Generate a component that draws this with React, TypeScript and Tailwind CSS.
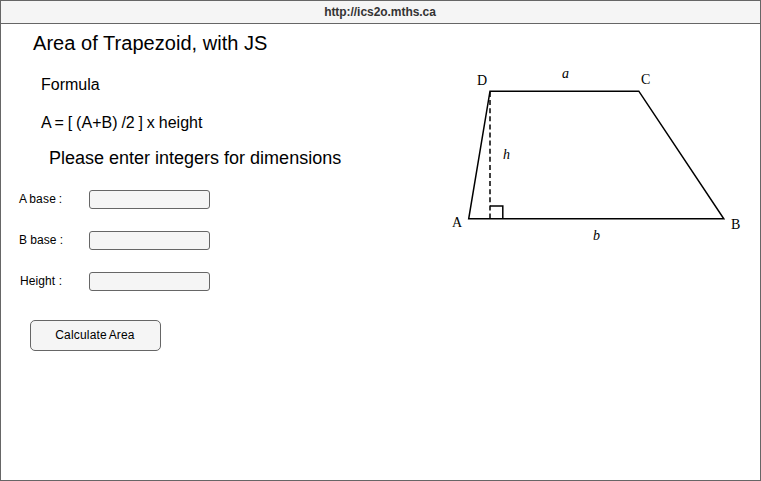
import React from "react";

function Field({ label, inset }: { label: string; inset: string }) {
  return (
    <label className="flex h-[19px] items-center">
      <span className={`w-[88px] shrink-0 whitespace-pre text-[12px] leading-[19px] ${inset}`}>{label}</span>
      <input className="h-[19px] w-[121px] rounded-[3px] border border-[#666] bg-[#f5f5f5] px-1 text-[12px] outline-none" />
    </label>
  );
}

function Trapezoid() {
  return (
    <svg
      width="300"
      height="190"
      viewBox="446 60 300 190"
      className="shrink-0 font-['Liberation_Serif',serif] text-[14px]"
      fill="none"
      stroke="#000"
      strokeWidth="1.5"
    >
      <path d="M490 91.2H638.8L723.8 218.8H468.7Z" />
      <path d="M490 92V218.8" strokeDasharray="5 3.1" />
      <path d="M490 206H502.8V218.8" />
      <g fill="#000" stroke="none">
        <text x="477" y="85">D</text>
        <text x="641" y="84">C</text>
        <text x="452" y="227">A</text>
        <text x="731" y="229">B</text>
        <g fontStyle="italic">
          <text x="562" y="78">a</text>
          <text x="503" y="159">h</text>
          <text x="593" y="240">b</text>
        </g>
      </g>
    </svg>
  );
}

export default function App() {
  return (
    <div className="flex h-[481px] w-[761px] flex-col overflow-hidden border border-[#666] bg-white font-['Liberation_Sans',Arial,sans-serif] text-black">
      <header className="flex h-[23px] shrink-0 items-center justify-center border-b border-[#666] bg-[#f5f5f5] pr-px text-[12px] font-bold tracking-[-0.05px] text-[#333]">
        http://ics2o.mths.ca
      </header>
      <div className="flex flex-1 items-start">
        <main className="flex w-[445px] shrink-0 flex-col items-start pt-[7px]">
          <h1 className="ml-8 text-[20px] leading-6 tracking-[0.04px]">Area of Trapezoid, with JS</h1>
          <h2 className="mt-5 ml-10 text-[16px] leading-5">Formula</h2>
          <p className="mt-[18px] ml-10 text-[16px] leading-5 tracking-[0.04px] [word-spacing:-0.7px]">A = [ (A+B) /2 ] x height</p>
          <p className="mt-[15px] ml-12 text-[18px] leading-5">Please enter integers for dimensions</p>
          <form className="mt-[22px] flex flex-col items-start gap-[22px]">
            <Field label="A base :" inset="pl-[18px] [word-spacing:-1px] tracking-[0.25px]" />
            <Field label="B base :" inset="pl-[18px]" />
            <Field label="Height :" inset="pl-[19px] tracking-[0.1px]" />
            <button type="button" className="mt-[7px] ml-[29px] h-[31px] w-[131px] rounded-[5px] border border-[#666] bg-[#f5f5f5] pr-px pb-[2px] text-[12px] tracking-[0.17px] [word-spacing:-1px]">
              Calculate Area
            </button>
          </form>
        </main>
        <div className="pt-9">
          <Trapezoid />
        </div>
      </div>
    </div>
  );
}
